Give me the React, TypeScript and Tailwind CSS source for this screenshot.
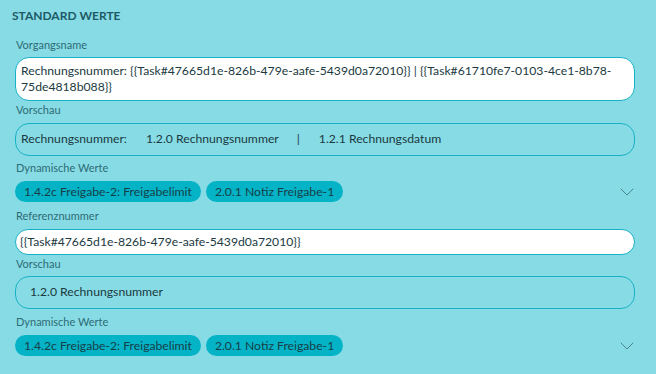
import { ChevronDown } from "lucide-react";

const chips = ["1.4.2c Freigabe-2: Freigabelimit", "2.0.1 Notiz Freigabe-1"];

function Label({ children, className = "" }: { children: React.ReactNode; className?: string }) {
  return <div className={`text-[11px] leading-[14px] text-[#2d6b76] pl-px ${className}`}>{children}</div>;
}

function ChipRow() {
  return (
    <div className="flex items-center mt-[6px] h-[21px]">
      <div className="flex gap-[5px] flex-1">
        {chips.map((c) => (
          <span
            key={c}
            className="h-[21px] px-[9px] rounded-full bg-[#05b3c7] text-[12.2px] leading-[21px] text-[#163f47]"
          >
            {c}
          </span>
        ))}
      </div>
      <ChevronDown className="w-6 h-6 text-[#4a8690] mr-[-4px]" strokeWidth={1} />
    </div>
  );
}

export default function App() {
  return (
    <div
      className="w-[656px] h-[374px] bg-[#87dbe4] pl-[15px] pr-[21px] pt-[7px] text-[#1b3a41]"
      style={{ fontFamily: "Lato, 'Noto Sans', sans-serif" }}
    >
      <h2 className="text-[12px] font-bold uppercase text-[#1c5a66] leading-[16px] mt-px mb-[14px] ml-[-3px]">
        Standard Werte
      </h2>

      <Label>Vorgangsname</Label>
      <div className="mt-[5px] bg-white border border-[#18b1c5] rounded-[14px] px-[5px] py-[5px] text-[12.2px] leading-[16px]">
        Rechnungsnummer: {"{{Task#47665d1e-826b-479e-aafe-5439d0a72010}}"} | {"{{Task#61710fe7-0103-4ce1-8b78-75de4818b088}}"}
      </div>

      <Label className="mt-[2px]">Vorschau</Label>
      <div className="mt-[6px] border border-[#18b1c5] rounded-[14px] h-[33px] px-[5px] flex items-center text-[12.2px]">
        <span>Rechnungsnummer:</span>
        <span className="ml-[19px]">1.2.0 Rechnungsnummer</span>
        <span className="ml-[18px]">|</span>
        <span className="ml-[19px]">1.2.1 Rechnungsdatum</span>
      </div>

      <Label className="mt-[5px]">Dynamische Werte</Label>
      <ChipRow />

      <Label className="mt-[7px]">Referenznummer</Label>
      <div className="mt-[6px] bg-white border border-[#18b1c5] rounded-[14px] h-[26px] px-[4px] flex items-center text-[12.2px]">
        {"{{Task#47665d1e-826b-479e-aafe-5439d0a72010}}"}
      </div>

      <Label className="mt-[2px]">Vorschau</Label>
      <div className="mt-[5px] border border-[#18b1c5] rounded-[14px] h-[33px] px-[14px] flex items-center text-[12.2px]">
        1.2.0 Rechnungsnummer
      </div>

      <Label className="mt-[6px]">Dynamische Werte</Label>
      <ChipRow />
    </div>
  );
}
